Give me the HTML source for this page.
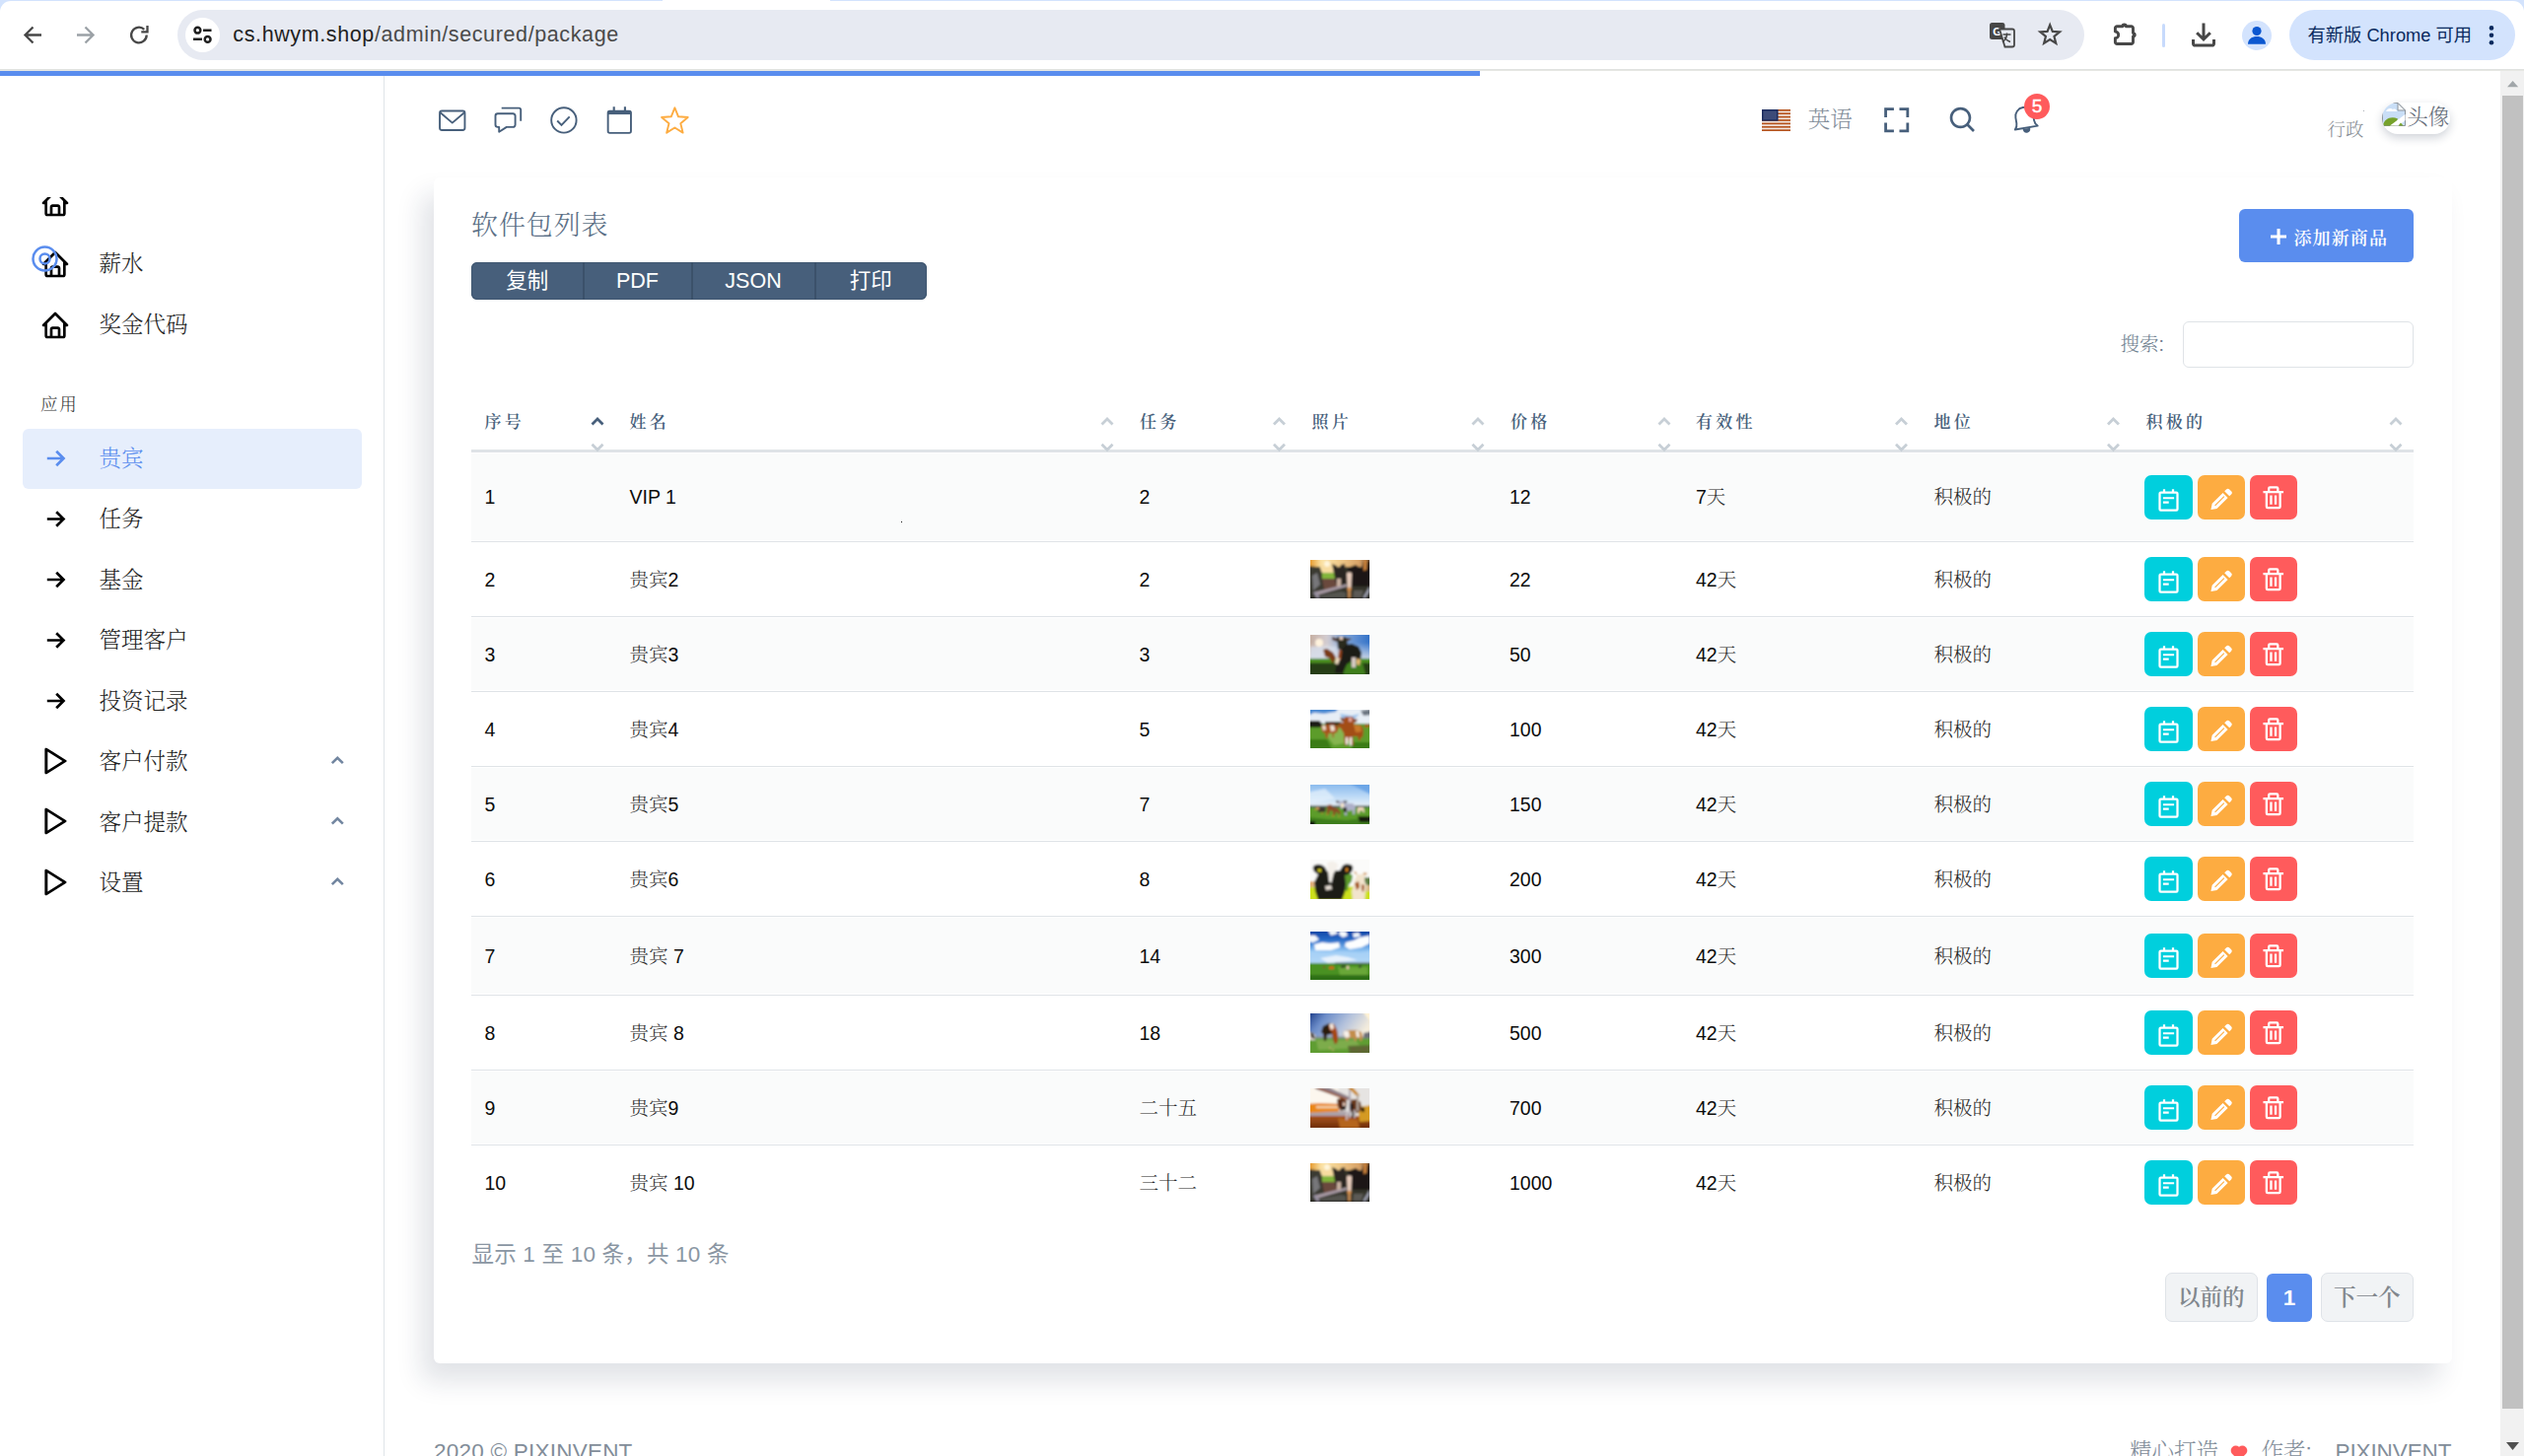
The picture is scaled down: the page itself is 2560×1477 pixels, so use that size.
<!DOCTYPE html>
<html lang="zh-CN">
<head>
<meta charset="utf-8">
<title>软件包列表</title>
<style>
html,body{margin:0;padding:0}
body{width:2560px;height:1477px;overflow:hidden;position:relative;background:#fff;font-family:"Liberation Sans","Noto Serif CJK SC",serif;color:#111}
.abs,.ic,.t{position:absolute}
.ic{display:block;overflow:visible}
.t{white-space:nowrap;line-height:1}
.sans{font-family:"Liberation Sans","Noto Sans CJK SC",sans-serif}
#toolbar{position:absolute;left:0;top:0;width:2560px;height:72px;background:#fff}
#page{position:absolute;left:0;top:72px;width:2536px;height:1405px;overflow:hidden;background:#fff}
#sb{position:absolute;left:2536px;top:72px;width:24px;height:1405px;background:#f1f1f1}
#ov{position:absolute;left:0;top:0;width:2536px;height:1477px;pointer-events:none}
.row{position:absolute;left:478px;width:1969.5px;border-bottom:1.5px solid #dfe3e7;box-sizing:border-box}
.odd{background:#fafbfb}
.cell{position:absolute;white-space:nowrap;line-height:24px;font-size:19.5px;color:#0c0c0c}
.cell .c{font-weight:300;color:#2a2a2a}
.th{position:absolute;top:417px;font-size:17px;font-weight:600;letter-spacing:3.2px;color:#475f7b;line-height:24px;white-space:nowrap}
.btn{position:absolute;height:45px;border-radius:7px}
.mi{position:absolute;left:100.5px;font-size:22.5px;line-height:30px;color:#222;white-space:nowrap;font-weight:300}
</style>
</head>
<body>

<div id="toolbar">
<div class="abs" style="left:0;top:0;width:2560px;height:12px;background:#d3e3fd"></div>
<div class="abs" style="left:0;top:1px;width:2560px;height:24px;background:#fff;border-radius:11px 11px 0 0"></div>
<div class="abs" style="left:672px;top:0;width:170px;height:2px;background:#fff"></div>
<svg class="ic" style="left:22px;top:24px;width:22px;height:22px" viewBox="0 0 22 22" fill="none" stroke="#474747" stroke-width="2.3"><path d="M20 11.5H4M11.5 3.5l-8 8 8 8"/></svg>
<svg class="ic" style="left:76px;top:24px;width:22px;height:22px" viewBox="0 0 22 22" fill="none" stroke="#9ba1a6" stroke-width="2.3"><path d="M2 11.5h16M10.5 3.5l8 8-8 8"/></svg>
<svg class="ic" style="left:130px;top:24px;width:22px;height:22px" viewBox="0 0 22 22" fill="none" stroke="#474747" stroke-width="2.3"><path d="M18.7 11.5a7.8 7.8 0 1 1-2.4-5.6"/><path d="M13.3 8.3h6.2V2.1"/></svg>
<div class="abs" style="left:180px;top:10px;width:1934px;height:51px;border-radius:26px;background:#e7eaf2"></div>
<div class="abs" style="left:187.5px;top:17.7px;width:35.8px;height:35.8px;border-radius:18px;background:#fff"></div>
<svg class="ic" style="left:195px;top:25px;width:21px;height:21px" viewBox="0 0 21 21" fill="none" stroke="#1f1f1f" stroke-width="2.5"><circle cx="5.4" cy="5.7" r="2.9"/><path d="M11 5.7h8.5M1 14.8h9"/><circle cx="15.6" cy="14.9" r="2.9"/></svg>
<div class="t sans" id="url" style="left:236.3px;top:19.3px;font-size:21.5px;line-height:32px;color:#1f1f1f;letter-spacing:.620px">cs.hwym.shop<span style="color:#4a4a4a">/admin/secured/package</span></div>
<svg class="ic" style="left:2017px;top:22px;width:27px;height:27px" viewBox="0 0 27 27"><rect x="1" y="1" width="15.5" height="17" rx="2.5" fill="#474747"/><text x="8.7" y="14" font-size="11.5" font-weight="700" fill="#fff" text-anchor="middle" font-family="Liberation Sans,sans-serif">G</text><path d="M11 7.5h13a2 2 0 0 1 2 2v14a2 2 0 0 1-2 2h-7.5z" fill="#e7eaf2" stroke="#474747" stroke-width="1.8"/><path d="M14.5 13h8M18.5 11.5V13c0 2.5-1.5 5.5-4.5 7.5M16 15.5c1 2 3 4 6 5" fill="none" stroke="#474747" stroke-width="1.5"/></svg>
<svg class="ic" style="left:2067px;top:22.5px;width:25px;height:25px" viewBox="0 0 25 25" fill="none" stroke="#474747" stroke-width="2.2" stroke-linejoin="miter"><polygon points="12.2,2.3 14.85,8.96 22,9.42 16.48,13.99 18.25,20.93 12.2,17.1 6.15,20.93 7.92,13.99 2.4,9.42 9.55,8.96"/></svg>
<svg class="ic" style="left:2142px;top:20px;width:28px;height:28px" viewBox="0 0 28 28" fill="none" stroke="#474747" stroke-width="2.9" stroke-linejoin="round"><path d="M3.4 8.5a1.8 1.8 0 0 1 1.8-1.8h5.7a1.7 1.7 0 0 1 3.4 0h5.4a1.8 1.8 0 0 1 1.8 1.8v5.1a1.7 1.7 0 0 1 0 3.4v5.7a1.8 1.8 0 0 1-1.8 1.8H5.2a1.8 1.8 0 0 1-1.8-1.8v-4a3.3 3.3 0 0 0 0-6.6z"/><circle cx="12.6" cy="5.7" r="1.5" fill="#474747" stroke="none"/><circle cx="22.6" cy="15.3" r="1.5" fill="#474747" stroke="none"/></svg>
<div class="abs" style="left:2193px;top:24px;width:3px;height:23.5px;border-radius:1.5px;background:#c7dafc"></div>
<svg class="ic" style="left:2222px;top:22px;width:26px;height:27px" viewBox="0 0 26 27" fill="none" stroke="#474747" stroke-width="3"><path d="M13 1.4v16M6.2 11.2l6.8 6.8 6.8-6.8M2.5 18v4.3a1.8 1.8 0 0 0 1.8 1.8h17.4a1.8 1.8 0 0 0 1.8-1.8V18"/></svg>
<div class="abs" style="left:2274px;top:21px;width:30px;height:30px;border-radius:15px;background:#d3e3fd"></div>
<svg class="ic" style="left:2274px;top:21px;width:30px;height:30px" viewBox="0 0 30 30" fill="#0b57d0"><circle cx="15" cy="10.5" r="4.6"/><path d="M6 23.7c0-5.2 4.5-7.7 9-7.7s9 2.5 9 7.7z"/></svg>
<div class="abs" style="left:2322px;top:10px;width:229px;height:50.5px;border-radius:26px;background:#d3e3fd"></div>
<div class="t sans" style="left:2340.5px;top:20px;font-size:18.3px;line-height:32px;color:#0a2a5e">有新版 Chrome 可用</div>
<svg class="ic" style="left:2521px;top:24px;width:12px;height:24px" viewBox="0 0 12 24" fill="#0a2a5e"><circle cx="6" cy="4.4" r="2.3"/><circle cx="6" cy="11.7" r="2.3"/><circle cx="6" cy="19.2" r="2.3"/></svg>
<div class="abs" style="left:0;top:70px;width:2560px;height:1px;background:#e0e2e0"></div><div class="abs" style="left:0;top:71px;width:2560px;height:1px;background:#e6e7e3"></div>
</div>
<div id="page"><div class="abs" style="left:0;top:-72px;width:2536px;height:1477px">
<div class="abs" style="left:0;top:72px;width:1500.5px;height:5px;background:#5a8dee"></div>
<div class="abs" style="left:389px;top:77px;width:1px;height:1400px;background:#e0e4e9"></div>
<div class="abs" style="left:0;top:200px;width:389px;height:30px;overflow:hidden"><svg class="ic" style="left:40.1px;top:-10.3px;width:32px;height:32px;fill:#000;" viewBox="0 0 24 24"><path d="M3 13h1v7c0 1.103.897 2 2 2h12c1.103 0 2-.897 2-2v-7h1a1 1 0 0 0 .707-1.707l-9-9a.999.999 0 0 0-1.414 0l-9 9A1 1 0 0 0 3 13zm7 7v-5h4v5h-4zm2-15.586 6 6V15l.001 5H16v-5c0-1.103-.897-2-2-2h-4c-1.103 0-2 .897-2 2v5H6v-9.586l6-6z"/></svg></div>
<svg class="ic" style="left:40.1px;top:251.7px;width:32px;height:32px;fill:#000;" viewBox="0 0 24 24"><path d="M3 13h1v7c0 1.103.897 2 2 2h12c1.103 0 2-.897 2-2v-7h1a1 1 0 0 0 .707-1.707l-9-9a.999.999 0 0 0-1.414 0l-9 9A1 1 0 0 0 3 13zm7 7v-5h4v5h-4zm2-15.586 6 6V15l.001 5H16v-5c0-1.103-.897-2-2-2h-4c-1.103 0-2 .897-2 2v5H6v-9.586l6-6z"/></svg>
<svg class="ic" style="left:31.7px;top:248.8px;width:27px;height:27px" viewBox="0 0 27 27" fill="none" stroke="#5a8dee" stroke-width="2.5"><circle cx="13.5" cy="13.5" r="12"/><circle cx="13.5" cy="13.5" r="5"/></svg>
<div class="mi" style="top:252.7px">薪水</div>
<svg class="ic" style="left:40.1px;top:313.6px;width:32px;height:32px;fill:#000;" viewBox="0 0 24 24"><path d="M3 13h1v7c0 1.103.897 2 2 2h12c1.103 0 2-.897 2-2v-7h1a1 1 0 0 0 .707-1.707l-9-9a.999.999 0 0 0-1.414 0l-9 9A1 1 0 0 0 3 13zm7 7v-5h4v5h-4zm2-15.586 6 6V15l.001 5H16v-5c0-1.103-.897-2-2-2h-4c-1.103 0-2 .897-2 2v5H6v-9.586l6-6z"/></svg>
<div class="mi" style="top:315px">奖金代码</div>
<div class="t" style="left:41px;top:400.3px;font-size:17.5px;letter-spacing:1.8px;color:#333;font-weight:300;line-height:20px">应用</div>
<div class="abs" style="left:23px;top:435px;width:344px;height:60.5px;border-radius:6px;background:#e6eefc"></div>
<div class="mi" style="top:450.8px;color:#5a8dee">贵宾</div>
<div class="mi" style="top:512.3px;color:#222">任务</div>
<div class="mi" style="top:573.8px;color:#222">基金</div>
<div class="mi" style="top:635.3px;color:#222">管理客户</div>
<div class="mi" style="top:696.8px;color:#222">投资记录</div>
<svg class="ic" style="left:38.1px;top:755.6px;width:35.4px;height:32px;fill:#000;" viewBox="0 0 24 24" preserveAspectRatio="none"><path d="M5.536 21.886a1.004 1.004 0 0 0 1.033-.064l13-9a1 1 0 0 0 0-1.644l-13-9A1 1 0 0 0 5 3v18a1 1 0 0 0 .536.886zM7 4.909 17.243 12 7 19.091V4.909z"/></svg>
<div class="mi" style="top:758.3px">客户付款</div>
<svg class="ic" style="left:38.1px;top:817.1px;width:35.4px;height:32px;fill:#000;" viewBox="0 0 24 24" preserveAspectRatio="none"><path d="M5.536 21.886a1.004 1.004 0 0 0 1.033-.064l13-9a1 1 0 0 0 0-1.644l-13-9A1 1 0 0 0 5 3v18a1 1 0 0 0 .536.886zM7 4.909 17.243 12 7 19.091V4.909z"/></svg>
<div class="mi" style="top:819.8px">客户提款</div>
<svg class="ic" style="left:38.1px;top:878.6px;width:35.4px;height:32px;fill:#000;" viewBox="0 0 24 24" preserveAspectRatio="none"><path d="M5.536 21.886a1.004 1.004 0 0 0 1.033-.064l13-9a1 1 0 0 0 0-1.644l-13-9A1 1 0 0 0 5 3v18a1 1 0 0 0 .536.886zM7 4.909 17.243 12 7 19.091V4.909z"/></svg>
<div class="mi" style="top:881.3px">设置</div>
<svg class="ic" style="left:444px;top:110px;width:30px;height:25px" viewBox="0 0 30 25" fill="none" stroke="#475f7b" stroke-width="1.9" stroke-linejoin="round"><rect x="2.05" y="2.45" width="25.4" height="19.5" rx="2.2"/><path d="M2.6 4.3 14.75 14.6 26.9 4.3"/></svg>
<svg class="ic" style="left:500px;top:107px;width:30px;height:29px" viewBox="0 0 30 29" fill="none" stroke="#475f7b" stroke-width="1.9" stroke-linejoin="round"><path d="M4.8 8.3h15.5a2.3 2.3 0 0 1 2.3 2.3v9a2.3 2.3 0 0 1-2.3 2.3h-6.5l-7.6 4.8v-4.8h-1.4a2.3 2.3 0 0 1-2.3-2.3v-9a2.3 2.3 0 0 1 2.3-2.3z"/><path d="M8.7 2.6h17.5a2 2 0 0 1 2 2v11.2"/></svg>
<svg class="ic" style="left:556px;top:107px;width:32px;height:30px" viewBox="0 0 32 30" fill="none" stroke="#475f7b" stroke-width="1.9"><circle cx="15.9" cy="14.95" r="12.7"/><path d="M9.2 15.5l4.3 4.3 8.2-8.5"/></svg>
<svg class="ic" style="left:614px;top:107px;width:30px;height:30px" viewBox="0 0 30 30" fill="none" stroke="#475f7b" stroke-width="1.9" stroke-linejoin="round"><rect x="2.65" y="5.75" width="23.3" height="22.1" rx="1.8"/><path d="M2.65 7.3h23.3" stroke-width="3.6"/><path d="M8.7 1.3v4.5M19.9 1.3v4.5" stroke-width="2.1"/></svg>
<svg class="ic" style="left:669px;top:107px;width:31px;height:31px" viewBox="0 0 31 31" fill="none" stroke="#fdac41" stroke-width="1.9" stroke-linejoin="round"><polygon points="15.4,2.3 19.04,11.28 28.71,11.97 21.3,18.22 23.63,27.63 15.4,22.5 7.17,27.63 9.5,18.22 2.09,11.97 11.76,11.28"/></svg>
<svg class="ic" style="left:1787px;top:111px;width:29px;height:22px" viewBox="0 0 29 22"><rect width="29" height="22" fill="#f3e9e4"/><rect x="0" y="0" width="29" height="1.7" fill="#b5531d"/><rect x="0" y="3.38" width="29" height="1.7" fill="#b5531d"/><rect x="0" y="6.77" width="29" height="1.7" fill="#b5531d"/><rect x="0" y="10.15" width="29" height="1.7" fill="#b5531d"/><rect x="0" y="13.54" width="29" height="1.7" fill="#b5531d"/><rect x="0" y="16.92" width="29" height="1.7" fill="#b5531d"/><rect x="0" y="20.31" width="29" height="1.7" fill="#b5531d"/><rect width="16.5" height="11.7" fill="#1b2b5e"/><rect x="1.5" y="1.5" width="13.5" height="8.7" fill="#5a6690" opacity=".55"/></svg>
<div class="t" style="left:1833.7px;top:109px;font-size:22.5px;line-height:26px;color:#828d99;font-weight:300">英语</div>
<svg class="ic" style="left:1906.8px;top:105.4px;width:33.4px;height:33.4px;fill:#475f7b;" viewBox="0 0 24 24"><path d="M5 5h5V3H3v7h2zm5 14H5v-5H3v7h7zm11-5h-2v5h-5v2h7zm-2-4h2V3h-7v2h5z"/></svg>
<svg class="ic" style="left:1974.8px;top:106px;width:32.4px;height:32.4px;fill:#475f7b;" viewBox="0 0 24 24"><path d="M10 18a7.952 7.952 0 0 0 4.897-1.688l4.396 4.396 1.414-1.414-4.396-4.396A7.952 7.952 0 0 0 18 10c0-4.411-3.589-8-8-8s-8 3.589-8 8 3.589 8 8 8zm0-14c3.309 0 6 2.691 6 6s-2.691 6-6 6-6-2.691-6-6 2.691-6 6-6z"/></svg>
<svg class="ic" style="left:2035px;top:100px;width:40px;height:40px" viewBox="0 0 40 40"><g transform="translate(18.5 19.4) rotate(-9.7)" fill="none" stroke="#475f7b" stroke-width="1.9" stroke-linejoin="round"><path d="M-11.6 10.3c1.6-1.6 2.6-3.3 2.6-6v-5.8a9 9 0 0 1 18 0v5.8c0 2.7 1 4.4 2.6 6z"/><path d="M-3.8 11.2a3.8 4.3 0 0 0 7.6 0z" fill="#475f7b" stroke="none"/></g></svg>
<div class="abs" style="left:2053.2px;top:95px;width:25.8px;height:25.8px;border-radius:13px;background:#ff5b5c"></div>
<div class="t sans" style="left:2053.2px;top:95px;width:25.8px;text-align:center;font-size:19px;line-height:25.5px;color:#fff;-webkit-text-stroke:.4px #fff">5</div>
<div class="t" style="left:2360.5px;top:120.5px;font-size:18.5px;line-height:22px;color:#8a8f96;font-weight:300">行政</div>
<div class="abs" style="left:2415.8px;top:103.6px;width:69.4px;height:32px;border-radius:16px;background:#fff;box-shadow:0 4px 10px rgba(25,42,70,.2);overflow:hidden"><svg class="ic" style="left:0;top:.400px;width:24px;height:24px" viewBox="0 0 24 24"><path d="M.5.5h15.5l7.5 7.5v15.5H.5z" fill="#c9def6" stroke="#8d949c" stroke-width="1"/><path d="M16 .5v7.5h7.5z" fill="#f4f6f8" stroke="#8d949c" stroke-width="1"/><path d="M4 9c1-3 5-4 7-2 2-1 4 0 4 2z" fill="#fff"/><path d="M1 23.5c1-7 8-10 15-7l-3 7z" fill="#76a22b"/><path d="M8 23.5 23.5 12v6L17 23.5z" fill="#fff"/><path d="M16.5 23.5l2.5-3 2.5 3z" fill="#76a22b"/></svg><div class="t" style="left:25.4px;top:2.4px;font-size:21.5px;line-height:26px;color:#666e7a;font-weight:300">头像</div></div>
<div class="abs" style="left:440px;top:180px;width:2046.5px;height:1202.5px;border-radius:6px;background:#fff;box-shadow:-12px 18px 27px 0 rgba(25,42,70,.13)"></div>
<div class="t" style="left:478px;top:212.7px;font-size:27px;letter-spacing:.900px;line-height:32px;color:#5b6f86;font-weight:300">软件包列表</div>
<div class="abs" style="left:2271px;top:212px;width:177px;height:54px;border-radius:6px;background:#5a8dee"></div>
<svg class="ic" style="left:2303px;top:232px;width:16px;height:16px" viewBox="0 0 16 16"><path d="M0 6.5h6.5V0h3.1v6.5H16v3.1H9.6V16H6.5V9.6H0z" fill="#fff"/></svg>
<div class="t" style="left:2326.5px;top:230px;font-size:18px;letter-spacing:1.1px;line-height:24px;color:#fff;font-weight:600">添加新商品</div>
<div class="abs" style="left:478px;top:266px;width:462px;height:38px;border-radius:6px;background:#475f7b;box-shadow:inset 0 0 0 1px #3f5670"></div>
<div class="abs" style="left:591px;top:266px;width:1.5px;height:38px;background:#3b516a"></div>
<div class="abs" style="left:701px;top:266px;width:1.5px;height:38px;background:#3b516a"></div>
<div class="abs" style="left:826px;top:266px;width:1.5px;height:38px;background:#3b516a"></div>
<div class="t sans" style="left:478px;width:113.5px;top:266px;text-align:center;font-size:21.5px;line-height:38px;color:#fff">复制</div>
<div class="t sans" style="left:591.5px;width:110px;top:266px;text-align:center;font-size:21.5px;line-height:38px;color:#fff">PDF</div>
<div class="t sans" style="left:701.5px;width:125px;top:266px;text-align:center;font-size:21.5px;line-height:38px;color:#fff">JSON</div>
<div class="t sans" style="left:826.5px;width:113.5px;top:266px;text-align:center;font-size:21.5px;line-height:38px;color:#fff">打印</div>
<div class="t" style="left:2150.5px;top:337px;font-size:19.5px;line-height:24px;color:#6f7f90;font-weight:300">搜索:</div>
<div class="abs" style="left:2213.5px;top:326px;width:234px;height:46.5px;border-radius:6px;border:1.5px solid #dfe3e7;box-sizing:border-box;background:#fff"></div>
<div class="th" style="left:491.5px">序号</div>
<div class="th" style="left:638.5px">姓名</div>
<div class="th" style="left:1156px">任务</div>
<div class="th" style="left:1330.5px">照片</div>
<div class="th" style="left:1532px">价格</div>
<div class="th" style="left:1720px">有效性</div>
<div class="th" style="left:1961.5px">地位</div>
<div class="th" style="left:2176.5px">积极的</div>
<div class="abs" style="left:478px;top:456px;width:1969.5px;height:3px;background:#dfe3e7"></div>
<div class="abs" style="left:478px;top:460px;width:1969.5px;height:88px;background:#fafbfb"></div>
<div class="abs" style="left:478px;top:549px;width:1969.5px;height:1px;background:#dfe3e7"></div>
<div class="cell" style="left:491.5px;top:492px">1</div>
<div class="cell" style="left:638.5px;top:492px">VIP 1</div>
<div class="cell" style="left:1155.5px;top:492px">2</div>
<div class="cell" style="left:1531px;top:492px">12</div>
<div class="cell" style="left:1720px;top:492px">7<span class="c">天</span></div>
<div class="cell" style="left:1961.5px;top:492px"><span class="c">积极的</span></div>
<div class="btn" style="left:2175px;top:482px;width:49px;background:#00cfdd"></div>
<div class="btn" style="left:2229px;top:482px;width:48px;background:#fdac41"></div>
<div class="btn" style="left:2282px;top:482px;width:48px;background:#ff5b5c"></div>
<svg class="ic" style="left:2186px;top:493.5px;width:27px;height:27px;fill:#fff;" viewBox="0 0 24 24"><path fill-rule="evenodd" d="M5 4h14a2 2 0 0 1 2 2v14a2 2 0 0 1-2 2H5a2 2 0 0 1-2-2V6a2 2 0 0 1 2-2zM5 6.1v13.9h14V6.1z"/><path d="M7 2h2v3H7zM15 2h2v3h-2zM7 9h10v1.9H7zM7 12.9h5.2v1.9H7z"/></svg>
<svg class="ic" style="left:2239.3px;top:493.3px;width:27.5px;height:27.5px;fill:#fff;" viewBox="0 0 24 24"><path d="M8.707 19.707 18 10.414 13.586 6l-9.293 9.293a1.003 1.003 0 0 0-.263.464L3 21l5.242-1.03c.176-.044.337-.135.465-.263zM21 7.414a2 2 0 0 0 0-2.828L19.414 3a2 2 0 0 0-2.828 0L15 4.586 19.414 9 21 7.414z"/><path d="M6.6 17.4 14.7 9.3" stroke="#fdac41" stroke-width="1" fill="none"/></svg>
<svg class="ic" style="left:2292.3px;top:490.7px;width:27.5px;height:27.5px;fill:#fff;" viewBox="0 0 24 24"><path d="M5 20a2 2 0 0 0 2 2h10a2 2 0 0 0 2-2V8h2V6h-4V4a2 2 0 0 0-2-2H9a2 2 0 0 0-2 2v2H3v2h2zM9 4h6v2H9zM8 8h9v12H7V8z"/><path d="M9 10h2v8H9zm4 0h2v8h-2z"/></svg>
<div class="abs" style="left:478px;top:625px;width:1969.5px;height:1px;background:#dfe3e7"></div>
<div class="cell" style="left:491.5px;top:576px">2</div>
<div class="cell" style="left:638.5px;top:576px"><span class="c">贵宾</span>2</div>
<div class="cell" style="left:1155.5px;top:576px">2</div>
<div class="cell" style="left:1531px;top:576px">22</div>
<div class="cell" style="left:1720px;top:576px">42<span class="c">天</span></div>
<div class="cell" style="left:1961.5px;top:576px"><span class="c">积极的</span></div>
<svg class="ic" style="left:1329px;top:568px;width:60px;height:39px;overflow:hidden" viewBox="0 0 60 39" preserveAspectRatio="none"><defs><filter id="bl1" x="-10%" y="-10%" width="120%" height="120%"><feGaussianBlur stdDeviation="0.8"/></filter><linearGradient id="ga1" x1="0" x2="1"><stop offset="0" stop-color="#e08a16"/><stop offset=".22" stop-color="#fbe3a6"/><stop offset=".45" stop-color="#f2cf8f"/><stop offset=".8" stop-color="#d9a266"/><stop offset="1" stop-color="#4a3424"/></linearGradient></defs><g filter="url(#bl1)"><rect x="-3" y="-3" width="66" height="45" fill="#35342c"/><rect x="-3" y="-3" width="66" height="10" fill="url(#ga1)"/><path d="M9 5h18v9H12z" fill="#f7dca0"/><circle cx="17" cy="4" r="3" fill="#fff6dc"/><path d="M-2 6l8 1 6 6v28H-2z" fill="#3b3a33"/><path d="M2 16l5-3 3 12-7 6z" fill="#77777a"/><rect x="12" y="13" width="13.5" height="6" fill="#82b53a"/><path d="M12 19h16v9l-14 3z" fill="#6b4a3c"/><path d="M22 4l5 2 1 5 3-6 4-1 1 9 6 3v8H26z" fill="#2a2822"/><path d="M38 8l8-3 6 4 2-8h8v26H42z" fill="#1b1916"/><path d="M54 0h4l-1 10-3 1z" fill="#c9813a"/><path d="M27 19h4v10h-4z" fill="#c9b0a0"/><path d="M37 14c0-2 5-2 5 0l-.500 12c0 3-1 5-2 5s-2-2-2-5z" fill="#ecd0c0"/><ellipse cx="39.5" cy="29.5" rx="2.2" ry="1.7" fill="#d8914a"/><path d="M38 31h3v9h-3z" fill="#b9834f"/><path d="M3 33 37 24.5v2.6L6 36z" fill="#a79aa4"/><path d="M3 33l3-1 5 8H7z" fill="#9790a0"/><path d="M52 40l8-13v5l-5 8z" fill="#9da0b0"/><path d="M10 36l20-4 6 1v7H12z" fill="#55554f"/><path d="M44 31h10l-3 9h-8z" fill="#5b5a55"/><rect x="-3" y="38.5" width="66" height="4" fill="#0b0a09"/></g></svg>
<div class="btn" style="left:2175px;top:565px;width:49px;background:#00cfdd"></div>
<div class="btn" style="left:2229px;top:565px;width:48px;background:#fdac41"></div>
<div class="btn" style="left:2282px;top:565px;width:48px;background:#ff5b5c"></div>
<svg class="ic" style="left:2186px;top:576.5px;width:27px;height:27px;fill:#fff;" viewBox="0 0 24 24"><path fill-rule="evenodd" d="M5 4h14a2 2 0 0 1 2 2v14a2 2 0 0 1-2 2H5a2 2 0 0 1-2-2V6a2 2 0 0 1 2-2zM5 6.1v13.9h14V6.1z"/><path d="M7 2h2v3H7zM15 2h2v3h-2zM7 9h10v1.9H7zM7 12.9h5.2v1.9H7z"/></svg>
<svg class="ic" style="left:2239.3px;top:576.3px;width:27.5px;height:27.5px;fill:#fff;" viewBox="0 0 24 24"><path d="M8.707 19.707 18 10.414 13.586 6l-9.293 9.293a1.003 1.003 0 0 0-.263.464L3 21l5.242-1.03c.176-.044.337-.135.465-.263zM21 7.414a2 2 0 0 0 0-2.828L19.414 3a2 2 0 0 0-2.828 0L15 4.586 19.414 9 21 7.414z"/><path d="M6.6 17.4 14.7 9.3" stroke="#fdac41" stroke-width="1" fill="none"/></svg>
<svg class="ic" style="left:2292.3px;top:573.7px;width:27.5px;height:27.5px;fill:#fff;" viewBox="0 0 24 24"><path d="M5 20a2 2 0 0 0 2 2h10a2 2 0 0 0 2-2V8h2V6h-4V4a2 2 0 0 0-2-2H9a2 2 0 0 0-2 2v2H3v2h2zM9 4h6v2H9zM8 8h9v12H7V8z"/><path d="M9 10h2v8H9zm4 0h2v8h-2z"/></svg>
<div class="abs" style="left:478px;top:627px;width:1969.5px;height:73px;background:#fafbfb"></div>
<div class="abs" style="left:478px;top:701px;width:1969.5px;height:1px;background:#dfe3e7"></div>
<div class="cell" style="left:491.5px;top:652px">3</div>
<div class="cell" style="left:638.5px;top:652px"><span class="c">贵宾</span>3</div>
<div class="cell" style="left:1155.5px;top:652px">3</div>
<div class="cell" style="left:1531px;top:652px">50</div>
<div class="cell" style="left:1720px;top:652px">42<span class="c">天</span></div>
<div class="cell" style="left:1961.5px;top:652px"><span class="c">积极的</span></div>
<svg class="ic" style="left:1329px;top:643.5px;width:60px;height:40px;overflow:hidden" viewBox="0 0 60 40" preserveAspectRatio="none"><defs><filter id="bl2" x="-10%" y="-10%" width="120%" height="120%"><feGaussianBlur stdDeviation="0.8"/></filter><linearGradient id="gb2" x1="0" x2="1"><stop offset="0" stop-color="#c4aa9b"/><stop offset=".3" stop-color="#d3ccd0"/><stop offset=".55" stop-color="#86a8d9"/><stop offset="1" stop-color="#2a6cc6"/></linearGradient><linearGradient id="hb2" x1="0" y1="0" x2="0" y2="1"><stop offset="0" stop-color="#fff" stop-opacity="0"/><stop offset="1" stop-color="#e6e6ea" stop-opacity=".85"/></linearGradient></defs><g filter="url(#bl2)"><rect x="-3" y="-3" width="66" height="46" fill="url(#gb2)"/><rect x="-3" y="8" width="66" height="17" fill="url(#hb2)"/><circle cx="9" cy="8" r="4" fill="#fff3de"/><path d="M0 12h26v12H0z" fill="#d5dcea" opacity=".8"/><rect x="-3" y="24" width="66" height="20" fill="#263c13"/><rect x="-3" y="24" width="66" height="4.5" fill="#4b9120"/><path d="M33 28h20l3 12H34z" fill="#3f7f1c"/><path d="M13 15l4-1 6 4 3 5-2 5h-2l-2-4-5-2z" fill="#7a3b16"/><path d="M22 2l6 2-1 3-5-2zM36 3l6 1-5 3z" fill="#4a2c18"/><path d="M27 2h9l2 8-2 5-4 1-4-2z" fill="#2a2a1e"/><rect x="29.5" y="2" width="3.5" height="3" fill="#e4c9b8"/><path d="M36 10l6-1 7 3 3 6-1 7-8 1-6 4-4 9h-8l2-13 3-9z" fill="#1b1b15"/><path d="M29 15l3 1-1 9-3 1z" fill="#9a4516"/><path d="M26 23l4 1-2 6-3-1z" fill="#f1dcc2"/><rect x="42" y="23" width="4" height="10" fill="#d9cbc6"/><path d="M47 24l4 1-1 6-3-1z" fill="#e9b774"/></g></svg>
<div class="btn" style="left:2175px;top:641px;width:49px;background:#00cfdd"></div>
<div class="btn" style="left:2229px;top:641px;width:48px;background:#fdac41"></div>
<div class="btn" style="left:2282px;top:641px;width:48px;background:#ff5b5c"></div>
<svg class="ic" style="left:2186px;top:652.5px;width:27px;height:27px;fill:#fff;" viewBox="0 0 24 24"><path fill-rule="evenodd" d="M5 4h14a2 2 0 0 1 2 2v14a2 2 0 0 1-2 2H5a2 2 0 0 1-2-2V6a2 2 0 0 1 2-2zM5 6.1v13.9h14V6.1z"/><path d="M7 2h2v3H7zM15 2h2v3h-2zM7 9h10v1.9H7zM7 12.9h5.2v1.9H7z"/></svg>
<svg class="ic" style="left:2239.3px;top:652.3px;width:27.5px;height:27.5px;fill:#fff;" viewBox="0 0 24 24"><path d="M8.707 19.707 18 10.414 13.586 6l-9.293 9.293a1.003 1.003 0 0 0-.263.464L3 21l5.242-1.03c.176-.044.337-.135.465-.263zM21 7.414a2 2 0 0 0 0-2.828L19.414 3a2 2 0 0 0-2.828 0L15 4.586 19.414 9 21 7.414z"/><path d="M6.6 17.4 14.7 9.3" stroke="#fdac41" stroke-width="1" fill="none"/></svg>
<svg class="ic" style="left:2292.3px;top:649.7px;width:27.5px;height:27.5px;fill:#fff;" viewBox="0 0 24 24"><path d="M5 20a2 2 0 0 0 2 2h10a2 2 0 0 0 2-2V8h2V6h-4V4a2 2 0 0 0-2-2H9a2 2 0 0 0-2 2v2H3v2h2zM9 4h6v2H9zM8 8h9v12H7V8z"/><path d="M9 10h2v8H9zm4 0h2v8h-2z"/></svg>
<div class="abs" style="left:478px;top:777px;width:1969.5px;height:1px;background:#dfe3e7"></div>
<div class="cell" style="left:491.5px;top:728px">4</div>
<div class="cell" style="left:638.5px;top:728px"><span class="c">贵宾</span>4</div>
<div class="cell" style="left:1155.5px;top:728px">5</div>
<div class="cell" style="left:1531px;top:728px">100</div>
<div class="cell" style="left:1720px;top:728px">42<span class="c">天</span></div>
<div class="cell" style="left:1961.5px;top:728px"><span class="c">积极的</span></div>
<svg class="ic" style="left:1329px;top:720px;width:60px;height:39px;overflow:hidden" viewBox="0 0 60 39" preserveAspectRatio="none"><defs><filter id="bl3" x="-10%" y="-10%" width="120%" height="120%"><feGaussianBlur stdDeviation="0.8"/></filter></defs><g filter="url(#bl3)"><rect x="-3" y="-3" width="66" height="46" fill="#e7eef6"/><path d="M-3-3h32l-3 5-12 2-10-1-7 3z" fill="#4b8bd3"/><path d="M30 4l12 2 8-2-6 6-12-1z" fill="#9cc4ee"/><path d="M51 1l12-2v6l-9 1z" fill="#6b7480"/><rect x="-3" y="14" width="66" height="30" fill="#5c9c2b"/><path d="M10 18h30l4 14-20 4z" fill="#86b54f"/><path d="M-3 30h20l6 12H-3zM40 33h23v10H44z" fill="#3a7b18"/><path d="M-3 11h12l3 3-1 4H-3z" fill="#1d1d12"/><path d="M15 12h15l4 2-1 2H15z" fill="#3a3a1e"/><rect x="19" y="13" width="6" height="2.5" fill="#6b2a1e"/><path d="M11 16l6-1 10 1 2 2-2 5-3 1v4h-1.5v-4h-4l-1 5h-1.5l-1-5-3-2z" fill="#a9521a"/><path d="M12 16h3l1 4-3 1zM20 16h4l1 5-4 1z" fill="#f3e7d8"/><path d="M30 8l5 1 1 2-4 1zM43 9l5 1-2 3-3-1z" fill="#6e2f12"/><path d="M35 7h8l2 5-1 3 8 1 2 5-1 7h-2v3h-2l-1-4h-5l1 9h-2.5l-1-5h-2l-1 5h-2.5l-1-12-3-5-3-2 1-3 4-1z" fill="#a34d17"/><path d="M44 15l7 1 1 6-6 1z" fill="#c77a2c"/><rect x="39" y="8" width="3" height="4" fill="#e3a69a"/><rect x="36" y="28" width="2.2" height="7" fill="#f6f1ea"/><rect x="40" y="28" width="2.2" height="8" fill="#f6f1ea"/><path d="M55 15l5-.500v3l-5 .500z" fill="#a8581c"/></g></svg>
<div class="btn" style="left:2175px;top:717px;width:49px;background:#00cfdd"></div>
<div class="btn" style="left:2229px;top:717px;width:48px;background:#fdac41"></div>
<div class="btn" style="left:2282px;top:717px;width:48px;background:#ff5b5c"></div>
<svg class="ic" style="left:2186px;top:728.5px;width:27px;height:27px;fill:#fff;" viewBox="0 0 24 24"><path fill-rule="evenodd" d="M5 4h14a2 2 0 0 1 2 2v14a2 2 0 0 1-2 2H5a2 2 0 0 1-2-2V6a2 2 0 0 1 2-2zM5 6.1v13.9h14V6.1z"/><path d="M7 2h2v3H7zM15 2h2v3h-2zM7 9h10v1.9H7zM7 12.9h5.2v1.9H7z"/></svg>
<svg class="ic" style="left:2239.3px;top:728.3px;width:27.5px;height:27.5px;fill:#fff;" viewBox="0 0 24 24"><path d="M8.707 19.707 18 10.414 13.586 6l-9.293 9.293a1.003 1.003 0 0 0-.263.464L3 21l5.242-1.03c.176-.044.337-.135.465-.263zM21 7.414a2 2 0 0 0 0-2.828L19.414 3a2 2 0 0 0-2.828 0L15 4.586 19.414 9 21 7.414z"/><path d="M6.6 17.4 14.7 9.3" stroke="#fdac41" stroke-width="1" fill="none"/></svg>
<svg class="ic" style="left:2292.3px;top:725.7px;width:27.5px;height:27.5px;fill:#fff;" viewBox="0 0 24 24"><path d="M5 20a2 2 0 0 0 2 2h10a2 2 0 0 0 2-2V8h2V6h-4V4a2 2 0 0 0-2-2H9a2 2 0 0 0-2 2v2H3v2h2zM9 4h6v2H9zM8 8h9v12H7V8z"/><path d="M9 10h2v8H9zm4 0h2v8h-2z"/></svg>
<div class="abs" style="left:478px;top:779px;width:1969.5px;height:73px;background:#fafbfb"></div>
<div class="abs" style="left:478px;top:853px;width:1969.5px;height:1px;background:#dfe3e7"></div>
<div class="cell" style="left:491.5px;top:804px">5</div>
<div class="cell" style="left:638.5px;top:804px"><span class="c">贵宾</span>5</div>
<div class="cell" style="left:1155.5px;top:804px">7</div>
<div class="cell" style="left:1531px;top:804px">150</div>
<div class="cell" style="left:1720px;top:804px">42<span class="c">天</span></div>
<div class="cell" style="left:1961.5px;top:804px"><span class="c">积极的</span></div>
<svg class="ic" style="left:1329px;top:795.5px;width:60px;height:40px;overflow:hidden" viewBox="0 0 60 40" preserveAspectRatio="none"><defs><filter id="bl4" x="-10%" y="-10%" width="120%" height="120%"><feGaussianBlur stdDeviation="0.8"/></filter><linearGradient id="gd4" x1="0" y1="0" x2="0" y2="1"><stop offset="0" stop-color="#7fb3ec"/><stop offset=".6" stop-color="#bfdcf7"/><stop offset="1" stop-color="#f1f3f8"/></linearGradient></defs><g filter="url(#bl4)"><rect x="-3" y="-3" width="66" height="26" fill="url(#gd4)"/><path d="M36-3h27v14z" fill="#5c9be2" opacity=".7"/><path d="M-3 8l18-4 10 10-28 6z" fill="#e6f1fb" opacity=".7"/><rect x="-3" y="22.5" width="66" height="21" fill="#5b9c29"/><rect x="-3" y="21.3" width="66" height="1.8" fill="#4b5a58"/><path d="M-3 33l20 2 20 1 26-3v10H-3z" fill="#3d7d1b"/><path d="M48 32h15v6H50z" fill="#161c0e"/><path d="M-3 37h8v6h-8z" fill="#0f1608"/><path d="M7 23l8 0 1 3-2 2H8z" fill="#3c372c"/><rect x="6" y="23" width="3" height="2" fill="#d99a5c"/><path d="M17 21l4-1 2 3 5 1 3 5-2 1-3-3-1 4h-2v-4l-3-1-1 4h-2z" fill="#8a4a28"/><path d="M26 16l3 0 2 1 3-1 3 1-2 2 8 0 3 3-1 8h-2v-4l-6 1v4h-2l-1-6-3-1-1-4-2-1z" fill="#aeb0c8"/><path d="M26 16l3 1-2 2zM34 16l4 1-3 2z" fill="#2e2d2a"/><path d="M31 19l3 0 0 4-3 0z" fill="#f7e8c8"/><path d="M33 23l4 0 0 5-3 0z" fill="#2a2721"/><path d="M48 23l6 0 1 5h-1.5l-1-2h-2l-1 3h-1.5z" fill="#f2d8bd"/><circle cx="5" cy="25" r=".8" fill="#e88a2a"/><circle cx="12" cy="29" r=".8" fill="#e88a2a"/><circle cx="17" cy="30" r=".8" fill="#e88a2a"/><circle cx="23" cy="31.5" r=".8" fill="#e88a2a"/><circle cx="29" cy="32" r=".8" fill="#e88a2a"/></g></svg>
<div class="btn" style="left:2175px;top:793px;width:49px;background:#00cfdd"></div>
<div class="btn" style="left:2229px;top:793px;width:48px;background:#fdac41"></div>
<div class="btn" style="left:2282px;top:793px;width:48px;background:#ff5b5c"></div>
<svg class="ic" style="left:2186px;top:804.5px;width:27px;height:27px;fill:#fff;" viewBox="0 0 24 24"><path fill-rule="evenodd" d="M5 4h14a2 2 0 0 1 2 2v14a2 2 0 0 1-2 2H5a2 2 0 0 1-2-2V6a2 2 0 0 1 2-2zM5 6.1v13.9h14V6.1z"/><path d="M7 2h2v3H7zM15 2h2v3h-2zM7 9h10v1.9H7zM7 12.9h5.2v1.9H7z"/></svg>
<svg class="ic" style="left:2239.3px;top:804.3px;width:27.5px;height:27.5px;fill:#fff;" viewBox="0 0 24 24"><path d="M8.707 19.707 18 10.414 13.586 6l-9.293 9.293a1.003 1.003 0 0 0-.263.464L3 21l5.242-1.03c.176-.044.337-.135.465-.263zM21 7.414a2 2 0 0 0 0-2.828L19.414 3a2 2 0 0 0-2.828 0L15 4.586 19.414 9 21 7.414z"/><path d="M6.6 17.4 14.7 9.3" stroke="#fdac41" stroke-width="1" fill="none"/></svg>
<svg class="ic" style="left:2292.3px;top:801.7px;width:27.5px;height:27.5px;fill:#fff;" viewBox="0 0 24 24"><path d="M5 20a2 2 0 0 0 2 2h10a2 2 0 0 0 2-2V8h2V6h-4V4a2 2 0 0 0-2-2H9a2 2 0 0 0-2 2v2H3v2h2zM9 4h6v2H9zM8 8h9v12H7V8z"/><path d="M9 10h2v8H9zm4 0h2v8h-2z"/></svg>
<div class="abs" style="left:478px;top:929px;width:1969.5px;height:1px;background:#dfe3e7"></div>
<div class="cell" style="left:491.5px;top:880px">6</div>
<div class="cell" style="left:638.5px;top:880px"><span class="c">贵宾</span>6</div>
<div class="cell" style="left:1155.5px;top:880px">8</div>
<div class="cell" style="left:1531px;top:880px">200</div>
<div class="cell" style="left:1720px;top:880px">42<span class="c">天</span></div>
<div class="cell" style="left:1961.5px;top:880px"><span class="c">积极的</span></div>
<svg class="ic" style="left:1329px;top:871.5px;width:60px;height:40px;overflow:hidden" viewBox="0 0 60 40" preserveAspectRatio="none"><defs><filter id="bl5" x="-10%" y="-10%" width="120%" height="120%"><feGaussianBlur stdDeviation="0.8"/></filter></defs><g filter="url(#bl5)"><rect x="-3" y="-3" width="66" height="46" fill="#fbfbfa"/><path d="M-3 27l8 1 28-1 30 1v15H-3z" fill="#cce01f"/><path d="M-3 22h7v6h-7z" fill="#e2b07a"/><path d="M54 18h9v8h-8z" fill="#5f7f45"/><path d="M54 26h9v6h-8z" fill="#d9b98a"/><path d="M33 14l5-1 5 3-1 6-3 4-1 6-4-1z" fill="#5b9a2b"/><path d="M3 7c3-3 8-3 12 1l2 4 13-1 3-5c3-2 8-2 10 1 1 4-2 8-8 9l1 9-1 8-3 8H8l-3-9-1-9 4-8c-4-2-6-5-5-8z" fill="#1d1d17"/><path d="M17 3l5-1.5 5 2 1 3-4.5 8-2 9-2.5-1-1-10z" fill="#f4f0ea"/><path d="M15 27l6-1 1 4-6 1z" fill="#e9dfd6"/><rect x="7.5" y="9.5" width="3.5" height="3" fill="#dad21a"/><rect x="36" y="8.5" width="2" height="3.5" fill="#e38a18"/><path d="M44 12l3 1 1 2 4 0 2-2 4 1-3 3 0 5 2 4-1 6-1 10h-12l-1-10 2-6 1-6 2-3z" fill="#f2e4cd"/><path d="M44 12l3 1-1 2zM54 13l4 1-3 2z" fill="#c98a4a"/><path d="M45 24l4-2 1 6-3 3zM52 25l3 1-1 7-2-2z" fill="#a4561a"/></g></svg>
<div class="btn" style="left:2175px;top:869px;width:49px;background:#00cfdd"></div>
<div class="btn" style="left:2229px;top:869px;width:48px;background:#fdac41"></div>
<div class="btn" style="left:2282px;top:869px;width:48px;background:#ff5b5c"></div>
<svg class="ic" style="left:2186px;top:880.5px;width:27px;height:27px;fill:#fff;" viewBox="0 0 24 24"><path fill-rule="evenodd" d="M5 4h14a2 2 0 0 1 2 2v14a2 2 0 0 1-2 2H5a2 2 0 0 1-2-2V6a2 2 0 0 1 2-2zM5 6.1v13.9h14V6.1z"/><path d="M7 2h2v3H7zM15 2h2v3h-2zM7 9h10v1.9H7zM7 12.9h5.2v1.9H7z"/></svg>
<svg class="ic" style="left:2239.3px;top:880.3px;width:27.5px;height:27.5px;fill:#fff;" viewBox="0 0 24 24"><path d="M8.707 19.707 18 10.414 13.586 6l-9.293 9.293a1.003 1.003 0 0 0-.263.464L3 21l5.242-1.03c.176-.044.337-.135.465-.263zM21 7.414a2 2 0 0 0 0-2.828L19.414 3a2 2 0 0 0-2.828 0L15 4.586 19.414 9 21 7.414z"/><path d="M6.6 17.4 14.7 9.3" stroke="#fdac41" stroke-width="1" fill="none"/></svg>
<svg class="ic" style="left:2292.3px;top:877.7px;width:27.5px;height:27.5px;fill:#fff;" viewBox="0 0 24 24"><path d="M5 20a2 2 0 0 0 2 2h10a2 2 0 0 0 2-2V8h2V6h-4V4a2 2 0 0 0-2-2H9a2 2 0 0 0-2 2v2H3v2h2zM9 4h6v2H9zM8 8h9v12H7V8z"/><path d="M9 10h2v8H9zm4 0h2v8h-2z"/></svg>
<div class="abs" style="left:478px;top:931px;width:1969.5px;height:77px;background:#fafbfb"></div>
<div class="abs" style="left:478px;top:1009px;width:1969.5px;height:1px;background:#dfe3e7"></div>
<div class="cell" style="left:491.5px;top:958px">7</div>
<div class="cell" style="left:638.5px;top:958px"><span class="c">贵宾</span> 7</div>
<div class="cell" style="left:1155.5px;top:958px">14</div>
<div class="cell" style="left:1531px;top:958px">300</div>
<div class="cell" style="left:1720px;top:958px">42<span class="c">天</span></div>
<div class="cell" style="left:1961.5px;top:958px"><span class="c">积极的</span></div>
<svg class="ic" style="left:1329px;top:945px;width:60px;height:49px;overflow:hidden" viewBox="0 0 60 49" preserveAspectRatio="none"><defs><filter id="bl6" x="-10%" y="-10%" width="120%" height="120%"><feGaussianBlur stdDeviation="0.8"/></filter><linearGradient id="gf6" x1="0" y1="0" x2="0" y2="1"><stop offset="0" stop-color="#0c3c9c"/><stop offset=".3" stop-color="#2569c6"/><stop offset=".6" stop-color="#86bdf0"/><stop offset="1" stop-color="#dcebfa"/></linearGradient></defs><g filter="url(#bl6)"><rect x="-3" y="-3" width="66" height="36" fill="url(#gf6)"/><path d="M18-1h8l2 3-7 2zM30-1l6 1 2 4-5 2-4-3zM43 2l6-1 2 4-7 1zM-3 4l8 0 4 4-6 3-6-1z" fill="#f7fafd"/><path d="M4 13l8-2 8 1 9-1 1 5-9 3-16 0zM36 11l8-2 6-3 10-2v8l-8 4-12 2-5-3z" fill="#fdfeff"/><path d="M-3 19l20 2 14-1 20 1 12-2v14H-3z" fill="#a9d2f6" opacity=".8"/><path d="M10 27l16-3 12 2 10 3-30 3z" fill="#eef5fd" opacity=".9"/><rect x="-3" y="32" width="66" height="20" fill="#4a9120"/><path d="M28 36h30v8H30z" fill="#69a737"/><path d="M-3 44h66v8H-3z" fill="#2f6f12"/><rect x="25" y="31.7" width="38" height="1.3" fill="#3c4a3a"/><path d="M19 36l3-1 2 1 0 2-5 0z" fill="#d4641c"/><path d="M31 35l4-1 1 2-5 1z" fill="#2b2727"/><rect x="37" y="35" width="2" height="3" fill="#f3c9b8"/><path d="M49 35l3-1 0 2-3 1z" fill="#2a2630"/><rect x="13" y="35.5" width="2" height="1.5" fill="#8a3a20"/></g></svg>
<div class="btn" style="left:2175px;top:947px;width:49px;background:#00cfdd"></div>
<div class="btn" style="left:2229px;top:947px;width:48px;background:#fdac41"></div>
<div class="btn" style="left:2282px;top:947px;width:48px;background:#ff5b5c"></div>
<svg class="ic" style="left:2186px;top:958.5px;width:27px;height:27px;fill:#fff;" viewBox="0 0 24 24"><path fill-rule="evenodd" d="M5 4h14a2 2 0 0 1 2 2v14a2 2 0 0 1-2 2H5a2 2 0 0 1-2-2V6a2 2 0 0 1 2-2zM5 6.1v13.9h14V6.1z"/><path d="M7 2h2v3H7zM15 2h2v3h-2zM7 9h10v1.9H7zM7 12.9h5.2v1.9H7z"/></svg>
<svg class="ic" style="left:2239.3px;top:958.3px;width:27.5px;height:27.5px;fill:#fff;" viewBox="0 0 24 24"><path d="M8.707 19.707 18 10.414 13.586 6l-9.293 9.293a1.003 1.003 0 0 0-.263.464L3 21l5.242-1.03c.176-.044.337-.135.465-.263zM21 7.414a2 2 0 0 0 0-2.828L19.414 3a2 2 0 0 0-2.828 0L15 4.586 19.414 9 21 7.414z"/><path d="M6.6 17.4 14.7 9.3" stroke="#fdac41" stroke-width="1" fill="none"/></svg>
<svg class="ic" style="left:2292.3px;top:955.7px;width:27.5px;height:27.5px;fill:#fff;" viewBox="0 0 24 24"><path d="M5 20a2 2 0 0 0 2 2h10a2 2 0 0 0 2-2V8h2V6h-4V4a2 2 0 0 0-2-2H9a2 2 0 0 0-2 2v2H3v2h2zM9 4h6v2H9zM8 8h9v12H7V8z"/><path d="M9 10h2v8H9zm4 0h2v8h-2z"/></svg>
<div class="abs" style="left:478px;top:1085px;width:1969.5px;height:1px;background:#dfe3e7"></div>
<div class="cell" style="left:491.5px;top:1036px">8</div>
<div class="cell" style="left:638.5px;top:1036px"><span class="c">贵宾</span> 8</div>
<div class="cell" style="left:1155.5px;top:1036px">18</div>
<div class="cell" style="left:1531px;top:1036px">500</div>
<div class="cell" style="left:1720px;top:1036px">42<span class="c">天</span></div>
<div class="cell" style="left:1961.5px;top:1036px"><span class="c">积极的</span></div>
<svg class="ic" style="left:1329px;top:1027.5px;width:60px;height:40px;overflow:hidden" viewBox="0 0 60 40" preserveAspectRatio="none"><defs><filter id="bl7" x="-10%" y="-10%" width="120%" height="120%"><feGaussianBlur stdDeviation="0.8"/></filter><linearGradient id="gg7" x1="0" y1="0" x2="1" y2=".35"><stop offset="0" stop-color="#0d2c7c"/><stop offset=".3" stop-color="#6b8cc8"/><stop offset=".65" stop-color="#b4c2dc"/><stop offset="1" stop-color="#f4ecdc"/></linearGradient></defs><g filter="url(#bl7)"><rect x="-3" y="-3" width="66" height="30" fill="url(#gg7)"/><path d="M52-3h11v14z" fill="#fff3d6"/><rect x="-3" y="24.5" width="66" height="19" fill="#5f9d33"/><path d="M6 27h40l6 8-44 2z" fill="#7dac4b"/><path d="M38 33l25-1v11H40z" fill="#5c6a30"/><path d="M-3 23h66v2.5H-3z" fill="#8d8fa0" opacity=".7"/><path d="M-3 19l5 0 3 3 0 5-8 0z" fill="#efe4da"/><path d="M0 19l3 1 2 6-4-1z" fill="#2b2620"/><path d="M13 13l6-3 5 1 3 6 1 8-1 5-2 1-2-5-1-5-5 1-1 6h-2l-1-7-2-2z" fill="#2a1a10"/><path d="M19 11l5 0 3 6 1 8-1 5-2 1-2-6-1-6-3-3z" fill="#a74913"/><path d="M19 11l4-1 1 5-3 2z" fill="#f4ebe2"/><path d="M34 18l6-1 7 0 5 2 1 5-1 4h-1.5l-1-3-2 0-1 3h-1.5l-1-3h-5l-1 3h-1.5l-1-4-2-2z" fill="#c38d4b"/><path d="M34 18l5 0 1 6-4 1-2-3zM46 18l3 0 1 6-3 0z" fill="#f7f1ea"/><path d="M54 20l9-2v7h-9z" fill="#6e7078"/><circle cx="20" cy="35" r=".8" fill="#f0b080"/><circle cx="23" cy="37" r=".8" fill="#f0b080"/><circle cx="44" cy="36" r=".8" fill="#8a3a4a"/><circle cx="50" cy="38" r=".8" fill="#8a3a4a"/><circle cx="55" cy="36" r=".8" fill="#8a3a4a"/></g></svg>
<div class="btn" style="left:2175px;top:1025px;width:49px;background:#00cfdd"></div>
<div class="btn" style="left:2229px;top:1025px;width:48px;background:#fdac41"></div>
<div class="btn" style="left:2282px;top:1025px;width:48px;background:#ff5b5c"></div>
<svg class="ic" style="left:2186px;top:1036.5px;width:27px;height:27px;fill:#fff;" viewBox="0 0 24 24"><path fill-rule="evenodd" d="M5 4h14a2 2 0 0 1 2 2v14a2 2 0 0 1-2 2H5a2 2 0 0 1-2-2V6a2 2 0 0 1 2-2zM5 6.1v13.9h14V6.1z"/><path d="M7 2h2v3H7zM15 2h2v3h-2zM7 9h10v1.9H7zM7 12.9h5.2v1.9H7z"/></svg>
<svg class="ic" style="left:2239.3px;top:1036.3px;width:27.5px;height:27.5px;fill:#fff;" viewBox="0 0 24 24"><path d="M8.707 19.707 18 10.414 13.586 6l-9.293 9.293a1.003 1.003 0 0 0-.263.464L3 21l5.242-1.03c.176-.044.337-.135.465-.263zM21 7.414a2 2 0 0 0 0-2.828L19.414 3a2 2 0 0 0-2.828 0L15 4.586 19.414 9 21 7.414z"/><path d="M6.6 17.4 14.7 9.3" stroke="#fdac41" stroke-width="1" fill="none"/></svg>
<svg class="ic" style="left:2292.3px;top:1033.7px;width:27.5px;height:27.5px;fill:#fff;" viewBox="0 0 24 24"><path d="M5 20a2 2 0 0 0 2 2h10a2 2 0 0 0 2-2V8h2V6h-4V4a2 2 0 0 0-2-2H9a2 2 0 0 0-2 2v2H3v2h2zM9 4h6v2H9zM8 8h9v12H7V8z"/><path d="M9 10h2v8H9zm4 0h2v8h-2z"/></svg>
<div class="abs" style="left:478px;top:1087px;width:1969.5px;height:73px;background:#fafbfb"></div>
<div class="abs" style="left:478px;top:1161px;width:1969.5px;height:1px;background:#dfe3e7"></div>
<div class="cell" style="left:491.5px;top:1112px">9</div>
<div class="cell" style="left:638.5px;top:1112px"><span class="c">贵宾</span>9</div>
<div class="cell" style="left:1155.5px;top:1112px"><span class="c">二十五</span></div>
<div class="cell" style="left:1531px;top:1112px">700</div>
<div class="cell" style="left:1720px;top:1112px">42<span class="c">天</span></div>
<div class="cell" style="left:1961.5px;top:1112px"><span class="c">积极的</span></div>
<svg class="ic" style="left:1329px;top:1103.5px;width:60px;height:40px;overflow:hidden" viewBox="0 0 60 40" preserveAspectRatio="none"><defs><filter id="bl8" x="-10%" y="-10%" width="120%" height="120%"><feGaussianBlur stdDeviation="0.8"/></filter><linearGradient id="gh8" x1="0" y1="0" x2="0" y2="1"><stop offset="0" stop-color="#a8531a"/><stop offset="1" stop-color="#5e2307"/></linearGradient></defs><g filter="url(#bl8)"><rect x="-3" y="-3" width="66" height="46" fill="#e6e4e2"/><path d="M-3-3h30l6 18H-3z" fill="#fcf7ee"/><path d="M-3 16l12-1 20 1v9H-3z" fill="#ea8718"/><path d="M6 18h24v2.2H6z" fill="#f2d3ae"/><path d="M-3 25l40-2 4 5-44 4z" fill="#aca2a8"/><rect x="-3" y="28" width="66" height="16" fill="url(#gh8)"/><path d="M48 19l15-2v16l-13 1z" fill="#d49a22"/><path d="M28 30l20 2 2 8H30z" fill="#b5651c"/><path d="M4-1l15 0 21 10 2 2-4 1L6 1z" fill="#8f8089"/><path d="M4-1l4 0 30 12-2 1z" fill="#9a4a18"/><path d="M40 12l6-1 5 3 1 8-4 3-7-1z" fill="#6a3a1e"/><path d="M39-2h2v32H39z" fill="#b3abb4"/><path d="M38-1l4-1 8 9-2 2z" fill="#c8861c"/><path d="M47 6h2v17H47z" fill="#b5a99e"/><path d="M27 11l5-1 5 3-1 8-5 2-3-4z" fill="#5a2a12"/><path d="M32 16l4 0 0 6-4 0zM40.5 15l3 1 0 6-3 0zM42 23l4 0 0 7-4 0zM52 19l3 1 0 4-3 0z" fill="#0e0c0c"/><path d="M33 14l3 1-1 3-2 0z" fill="#e8c8b8"/><path d="M36 24h1.8v8H36zM44 22h1.8v8H44z" fill="#c9bfc2"/></g></svg>
<div class="btn" style="left:2175px;top:1101px;width:49px;background:#00cfdd"></div>
<div class="btn" style="left:2229px;top:1101px;width:48px;background:#fdac41"></div>
<div class="btn" style="left:2282px;top:1101px;width:48px;background:#ff5b5c"></div>
<svg class="ic" style="left:2186px;top:1112.5px;width:27px;height:27px;fill:#fff;" viewBox="0 0 24 24"><path fill-rule="evenodd" d="M5 4h14a2 2 0 0 1 2 2v14a2 2 0 0 1-2 2H5a2 2 0 0 1-2-2V6a2 2 0 0 1 2-2zM5 6.1v13.9h14V6.1z"/><path d="M7 2h2v3H7zM15 2h2v3h-2zM7 9h10v1.9H7zM7 12.9h5.2v1.9H7z"/></svg>
<svg class="ic" style="left:2239.3px;top:1112.3px;width:27.5px;height:27.5px;fill:#fff;" viewBox="0 0 24 24"><path d="M8.707 19.707 18 10.414 13.586 6l-9.293 9.293a1.003 1.003 0 0 0-.263.464L3 21l5.242-1.03c.176-.044.337-.135.465-.263zM21 7.414a2 2 0 0 0 0-2.828L19.414 3a2 2 0 0 0-2.828 0L15 4.586 19.414 9 21 7.414z"/><path d="M6.6 17.4 14.7 9.3" stroke="#fdac41" stroke-width="1" fill="none"/></svg>
<svg class="ic" style="left:2292.3px;top:1109.7px;width:27.5px;height:27.5px;fill:#fff;" viewBox="0 0 24 24"><path d="M5 20a2 2 0 0 0 2 2h10a2 2 0 0 0 2-2V8h2V6h-4V4a2 2 0 0 0-2-2H9a2 2 0 0 0-2 2v2H3v2h2zM9 4h6v2H9zM8 8h9v12H7V8z"/><path d="M9 10h2v8H9zm4 0h2v8h-2z"/></svg>
<div class="cell" style="left:491.5px;top:1187.5px">10</div>
<div class="cell" style="left:638.5px;top:1187.5px"><span class="c">贵宾</span> 10</div>
<div class="cell" style="left:1155.5px;top:1187.5px"><span class="c">三十二</span></div>
<div class="cell" style="left:1531px;top:1187.5px">1000</div>
<div class="cell" style="left:1720px;top:1187.5px">42<span class="c">天</span></div>
<div class="cell" style="left:1961.5px;top:1187.5px"><span class="c">积极的</span></div>
<svg class="ic" style="left:1329px;top:1180px;width:60px;height:39px;overflow:hidden" viewBox="0 0 60 39" preserveAspectRatio="none"><defs><filter id="bl9" x="-10%" y="-10%" width="120%" height="120%"><feGaussianBlur stdDeviation="0.8"/></filter><linearGradient id="ga9" x1="0" x2="1"><stop offset="0" stop-color="#e08a16"/><stop offset=".22" stop-color="#fbe3a6"/><stop offset=".45" stop-color="#f2cf8f"/><stop offset=".8" stop-color="#d9a266"/><stop offset="1" stop-color="#4a3424"/></linearGradient></defs><g filter="url(#bl9)"><rect x="-3" y="-3" width="66" height="45" fill="#35342c"/><rect x="-3" y="-3" width="66" height="10" fill="url(#ga9)"/><path d="M9 5h18v9H12z" fill="#f7dca0"/><circle cx="17" cy="4" r="3" fill="#fff6dc"/><path d="M-2 6l8 1 6 6v28H-2z" fill="#3b3a33"/><path d="M2 16l5-3 3 12-7 6z" fill="#77777a"/><rect x="12" y="13" width="13.5" height="6" fill="#82b53a"/><path d="M12 19h16v9l-14 3z" fill="#6b4a3c"/><path d="M22 4l5 2 1 5 3-6 4-1 1 9 6 3v8H26z" fill="#2a2822"/><path d="M38 8l8-3 6 4 2-8h8v26H42z" fill="#1b1916"/><path d="M54 0h4l-1 10-3 1z" fill="#c9813a"/><path d="M27 19h4v10h-4z" fill="#c9b0a0"/><path d="M37 14c0-2 5-2 5 0l-.500 12c0 3-1 5-2 5s-2-2-2-5z" fill="#ecd0c0"/><ellipse cx="39.5" cy="29.5" rx="2.2" ry="1.7" fill="#d8914a"/><path d="M38 31h3v9h-3z" fill="#b9834f"/><path d="M3 33 37 24.5v2.6L6 36z" fill="#a79aa4"/><path d="M3 33l3-1 5 8H7z" fill="#9790a0"/><path d="M52 40l8-13v5l-5 8z" fill="#9da0b0"/><path d="M10 36l20-4 6 1v7H12z" fill="#55554f"/><path d="M44 31h10l-3 9h-8z" fill="#5b5a55"/><rect x="-3" y="38.5" width="66" height="4" fill="#0b0a09"/></g></svg>
<div class="btn" style="left:2175px;top:1177px;width:49px;background:#00cfdd"></div>
<div class="btn" style="left:2229px;top:1177px;width:48px;background:#fdac41"></div>
<div class="btn" style="left:2282px;top:1177px;width:48px;background:#ff5b5c"></div>
<svg class="ic" style="left:2186px;top:1188.5px;width:27px;height:27px;fill:#fff;" viewBox="0 0 24 24"><path fill-rule="evenodd" d="M5 4h14a2 2 0 0 1 2 2v14a2 2 0 0 1-2 2H5a2 2 0 0 1-2-2V6a2 2 0 0 1 2-2zM5 6.1v13.9h14V6.1z"/><path d="M7 2h2v3H7zM15 2h2v3h-2zM7 9h10v1.9H7zM7 12.9h5.2v1.9H7z"/></svg>
<svg class="ic" style="left:2239.3px;top:1188.3px;width:27.5px;height:27.5px;fill:#fff;" viewBox="0 0 24 24"><path d="M8.707 19.707 18 10.414 13.586 6l-9.293 9.293a1.003 1.003 0 0 0-.263.464L3 21l5.242-1.03c.176-.044.337-.135.465-.263zM21 7.414a2 2 0 0 0 0-2.828L19.414 3a2 2 0 0 0-2.828 0L15 4.586 19.414 9 21 7.414z"/><path d="M6.6 17.4 14.7 9.3" stroke="#fdac41" stroke-width="1" fill="none"/></svg>
<svg class="ic" style="left:2292.3px;top:1185.7px;width:27.5px;height:27.5px;fill:#fff;" viewBox="0 0 24 24"><path d="M5 20a2 2 0 0 0 2 2h10a2 2 0 0 0 2-2V8h2V6h-4V4a2 2 0 0 0-2-2H9a2 2 0 0 0-2 2v2H3v2h2zM9 4h6v2H9zM8 8h9v12H7V8z"/><path d="M9 10h2v8H9zm4 0h2v8h-2z"/></svg>
<div class="abs" style="left:914px;top:529px;width:1px;height:1px;background:#111"></div>
<div class="abs" style="left:2397px;top:112px;width:1px;height:1px;background:#a9aeb6"></div>
<div class="t sans" style="left:478.5px;top:1259px;font-size:22.5px;line-height:28px;color:#8a96a3;letter-spacing:.200px">显示 1 至 10 条，共 10 条</div>
<div class="abs" style="left:2196px;top:1291px;width:93.5px;height:50px;border-radius:7px;background:#f1f3f5;border:1px solid #dfe3e8;box-sizing:border-box"></div>
<div class="t" style="left:2196px;top:1291.5px;width:93.5px;text-align:center;font-size:22.5px;line-height:49px;color:#81878d;font-weight:600">以前的</div>
<div class="abs" style="left:2354px;top:1291px;width:93.5px;height:50px;border-radius:7px;background:#f1f3f5;border:1px solid #dfe3e8;box-sizing:border-box"></div>
<div class="t" style="left:2354px;top:1291.5px;width:93.5px;text-align:center;font-size:22.5px;line-height:49px;color:#81878d;font-weight:600">下一个</div>
<div class="abs" style="left:2299px;top:1291.5px;width:46px;height:49px;border-radius:6px;background:#5a8dee"></div>
<div class="t sans" style="left:2299px;top:1291.5px;width:46px;text-align:center;font-size:22.5px;line-height:50px;color:#fff;font-weight:700">1</div>
<div class="t sans" style="left:440px;top:1459px;font-size:22.5px;line-height:28px;color:#828d99;letter-spacing:.230px">2020 © PIXINVENT</div>
<div class="t" style="left:2160px;top:1459px;font-size:22.5px;line-height:28px;color:#828d99;font-weight:300">精心打造</div>
<svg class="ic" style="left:2260.5px;top:1463.5px;width:20px;height:20px;fill:#ff5b5c;" viewBox="0 0 24 24"><path d="M20.205 4.791a5.938 5.938 0 0 0-4.209-1.754A5.906 5.906 0 0 0 12 4.595a5.904 5.904 0 0 0-3.996-1.558 5.942 5.942 0 0 0-4.213 1.758c-2.353 2.363-2.352 6.059.002 8.412L12 21.414l8.207-8.207c2.354-2.353 2.355-6.049-.002-8.416z"/></svg>
<div class="t" style="left:2293.5px;top:1459px;font-size:22.5px;line-height:28px;color:#828d99;font-weight:300">作者:</div>
<div class="t sans" style="left:2368.5px;top:1459px;font-size:22.5px;line-height:28px;color:#828d99;letter-spacing:-.100px">PIXINVENT</div>
<svg id="ov" viewBox="0 0 2536 1477"><path d="M47.8 465H64.5M57.2 457.7l7.3 7.3-7.3 7.3" fill="none" stroke="#5a8dee" stroke-width="2.7"/><path d="M47.8 526.5H64.5M57.2 519.2l7.3 7.3-7.3 7.3" fill="none" stroke="#000" stroke-width="2.7"/><path d="M47.8 588H64.5M57.2 580.7l7.3 7.3-7.3 7.3" fill="none" stroke="#000" stroke-width="2.7"/><path d="M47.8 649.5H64.5M57.2 642.2l7.3 7.3-7.3 7.3" fill="none" stroke="#000" stroke-width="2.7"/><path d="M47.8 711H64.5M57.2 703.7l7.3 7.3-7.3 7.3" fill="none" stroke="#000" stroke-width="2.7"/><polyline points="336.8,774.1 342.3,768.7 347.8,774.1" fill="none" stroke="#7286a0" stroke-width="2.6"/><polyline points="336.8,835.6 342.3,830.2 347.8,835.6" fill="none" stroke="#7286a0" stroke-width="2.6"/><polyline points="336.8,897.1 342.3,891.7 347.8,897.1" fill="none" stroke="#7286a0" stroke-width="2.6"/><polyline points="600.5,430.45 606,424.95 611.5,430.45" fill="none" stroke="#475f7b" stroke-width="2.8"/><polyline points="600.5,450.65 606,456.15 611.5,450.65" fill="none" stroke="#c7cfd6" stroke-width="2.8"/><polyline points="1117.5,430.45 1123,424.95 1128.5,430.45" fill="none" stroke="#c7cfd6" stroke-width="2.8"/><polyline points="1117.5,450.65 1123,456.15 1128.5,450.65" fill="none" stroke="#c7cfd6" stroke-width="2.8"/><polyline points="1292,430.45 1297.5,424.95 1303,430.45" fill="none" stroke="#c7cfd6" stroke-width="2.8"/><polyline points="1292,450.65 1297.5,456.15 1303,450.65" fill="none" stroke="#c7cfd6" stroke-width="2.8"/><polyline points="1493.5,430.45 1499,424.95 1504.5,430.45" fill="none" stroke="#c7cfd6" stroke-width="2.8"/><polyline points="1493.5,450.65 1499,456.15 1504.5,450.65" fill="none" stroke="#c7cfd6" stroke-width="2.8"/><polyline points="1682.5,430.45 1688,424.95 1693.5,430.45" fill="none" stroke="#c7cfd6" stroke-width="2.8"/><polyline points="1682.5,450.65 1688,456.15 1693.5,450.65" fill="none" stroke="#c7cfd6" stroke-width="2.8"/><polyline points="1923,430.45 1928.5,424.95 1934,430.45" fill="none" stroke="#c7cfd6" stroke-width="2.8"/><polyline points="1923,450.65 1928.5,456.15 1934,450.65" fill="none" stroke="#c7cfd6" stroke-width="2.8"/><polyline points="2138,430.45 2143.5,424.95 2149,430.45" fill="none" stroke="#c7cfd6" stroke-width="2.8"/><polyline points="2138,450.65 2143.5,456.15 2149,450.65" fill="none" stroke="#c7cfd6" stroke-width="2.8"/><polyline points="2424.5,430.45 2430,424.95 2435.5,430.45" fill="none" stroke="#c7cfd6" stroke-width="2.8"/><polyline points="2424.5,450.65 2430,456.15 2435.5,450.65" fill="none" stroke="#c7cfd6" stroke-width="2.8"/></svg>
</div></div>
<div id="sb">
<svg class="ic" style="left:7px;top:9.7px;width:11.2px;height:6.3px" viewBox="0 0 13 8" preserveAspectRatio="none"><path d="M0 8 6.5 0 13 8z" fill="#a1a6a9"/></svg>
<div class="abs" style="left:2px;top:25px;width:21px;height:1332px;background:#c1c1c1"></div>
<svg class="ic" style="left:6px;top:1391px;width:13px;height:8px" viewBox="0 0 13 8"><path d="M0 0 6.5 8 13 0z" fill="#505050"/></svg>
</div>
</body></html>
